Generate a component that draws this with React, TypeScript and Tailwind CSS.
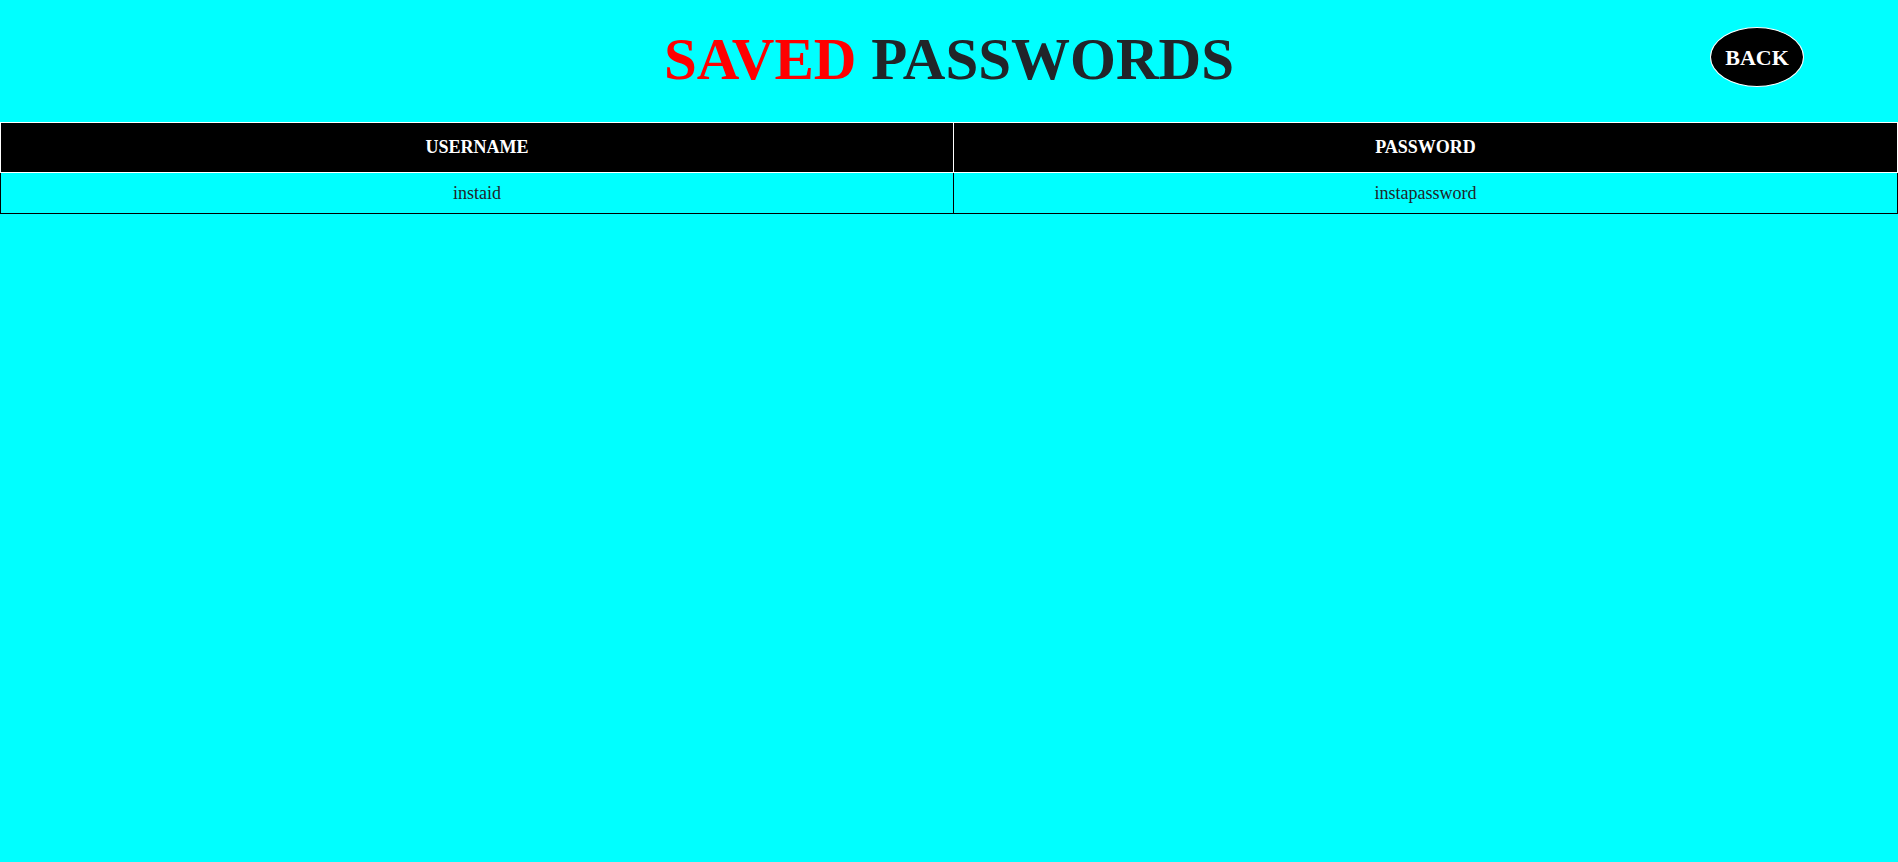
export default function App() {
  const rows = [{ username: "instaid", password: "instapassword" }];

  return (
    <div className="min-h-[862px] bg-[#00ffff] text-[#212529]" style={{ fontFamily: '"Liberation Serif", "Times New Roman", serif' }}>
      <div className="grid h-[122px] grid-cols-[1fr_auto_1fr] items-center">
        <div />
        <h1 className="pb-[4px] text-center text-[59px] font-bold leading-none">
          <span className="text-[#ff0000]">SAVED</span> PASSWORDS
        </h1>
        <div className="flex justify-end">
          <button className="mr-[94px] mb-[8px] flex h-[60px] w-[94px] items-center justify-center rounded-[50%] border border-white bg-black text-[22px] font-bold text-white">
            BACK
          </button>
        </div>
      </div>

      <table className="w-full border-collapse text-center text-[18px]">
        <thead>
          <tr className="bg-black text-white">
            <th className="h-[50px] w-[953px] border border-white font-bold">USERNAME</th>
            <th className="h-[50px] border border-white font-bold">PASSWORD</th>
          </tr>
        </thead>
        <tbody>
          {rows.map((r) => (
            <tr key={r.username}>
              <td className="h-[41px] border border-black">{r.username}</td>
              <td className="h-[41px] border border-black">{r.password}</td>
            </tr>
          ))}
        </tbody>
      </table>
    </div>
  );
}
